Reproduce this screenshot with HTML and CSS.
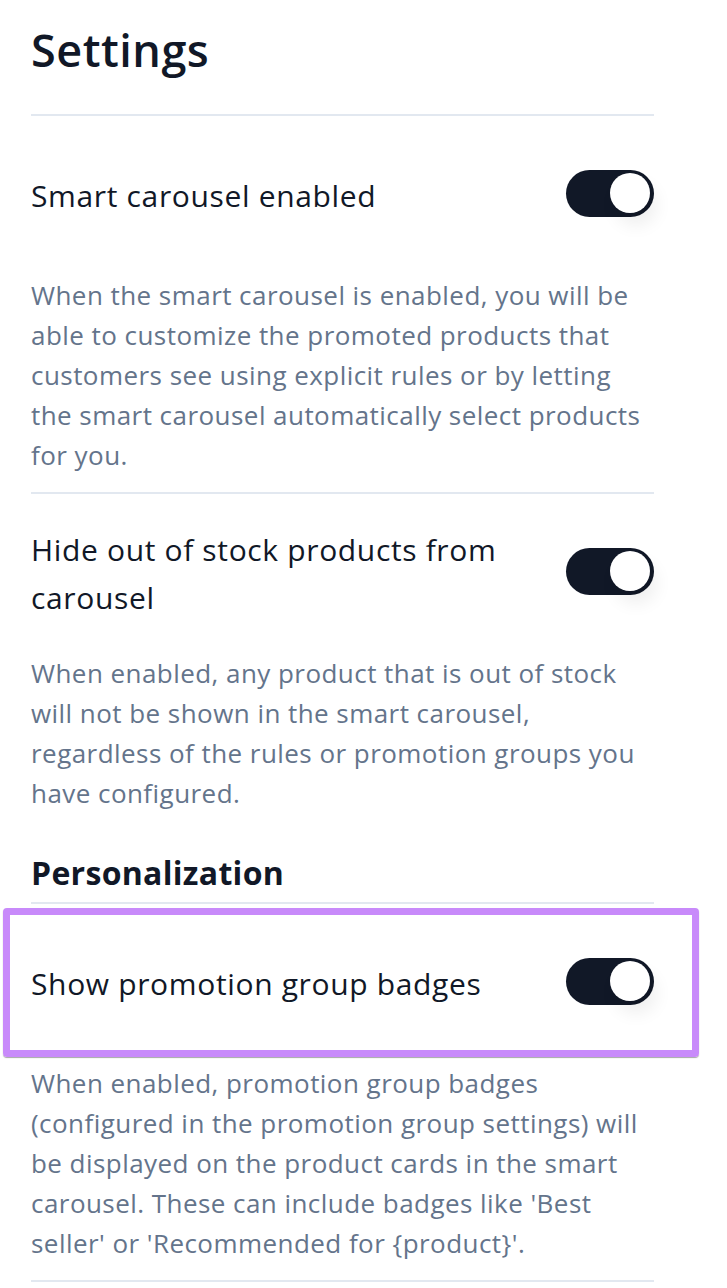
FILE: index.html
```html
<!DOCTYPE html>
<html lang="en">
<head>
<meta charset="utf-8">
<title>Settings</title>
<link rel="stylesheet" href="styles.css">
</head>
<body>
<main class="page">
  <h1 class="title">Settings</h1>
  <hr class="divider">

  <div class="row">
    <span class="label">Smart carousel enabled</span>
    <span class="toggle on"><span class="knob"></span></span>
  </div>
  <p class="desc">When the smart carousel is enabled, you will be able to customize the promoted products that customers see using explicit rules or by letting the smart carousel automatically select products for you.</p>
  <hr class="divider">

  <div class="row">
    <span class="label">Hide out of stock products from carousel</span>
    <span class="toggle on"><span class="knob"></span></span>
  </div>
  <p class="desc">When enabled, any product that is out of stock will not be shown in the smart carousel, regardless of the rules or promotion groups you have configured.</p>

  <h2 class="section">Personalization</h2>
  <hr class="divider">

  <div class="row highlighted">
    <span class="label">Show promotion group badges</span>
    <span class="toggle on"><span class="knob"></span></span>
  </div>
  <p class="desc">When enabled, promotion group badges (configured in the promotion group settings) will be displayed on the product cards in the smart carousel. These can include badges like 'Best seller' or 'Recommended for {product}'.</p>
  <hr class="divider">
</main>
</body>
</html>
```

FILE: styles.css
```css
html, body {
  margin: 0;
  padding: 0;
  background: #ffffff;
}

body {
  font-family: "Open Sans", "Liberation Sans", sans-serif;
  color: #111827;
}

.page {
  width: 623px;
  padding: 0 0 0 31px;
}

.title {
  margin: 0 0 34px;
  padding-top: 20px;
  font-size: 45px;
  line-height: 60px;
  font-weight: 600;
  letter-spacing: 0.5px;
  color: #111827;
}

.divider {
  margin: 0;
  border: 0;
  height: 2px;
  background: #e2e8f0;
}

.row {
  position: relative;
  display: flex;
  align-items: center;
  justify-content: space-between;
  min-height: 159px;
  box-sizing: border-box;
}

.label {
  font-size: 30px;
  line-height: 48px;
  letter-spacing: 0.65px;
  color: #111827;
  max-width: 480px;
}

.toggle {
  flex: none;
  width: 88px;
  height: 47px;
  border-radius: 24px;
  background: #111827;
  display: flex;
  align-items: center;
  justify-content: flex-end;
  padding: 0 4px;
  box-sizing: border-box;
  margin-top: -5px;
}

.knob {
  width: 40px;
  height: 40px;
  border-radius: 50%;
  background: #ffffff;
  box-shadow: 6px 12px 18px rgba(0, 0, 0, 0.07);
}

.desc {
  margin: 0 0 17px;
  font-size: 26px;
  line-height: 40px;
  letter-spacing: 0.45px;
  color: #64748b;
}

.section {
  margin: 36px 0 5px;
  font-size: 32px;
  line-height: 48px;
  font-weight: 700;
  letter-spacing: 0.3px;
  color: #111827;
}

.highlighted::after {
  content: "";
  position: absolute;
  top: 4px;
  bottom: 6px;
  left: -28px;
  right: -45px;
  border: 7px solid #c88afa;
  border-radius: 4px;
  box-shadow: 0 1px 1px rgba(0, 0, 0, 0.35);
  pointer-events: none;
}
```
